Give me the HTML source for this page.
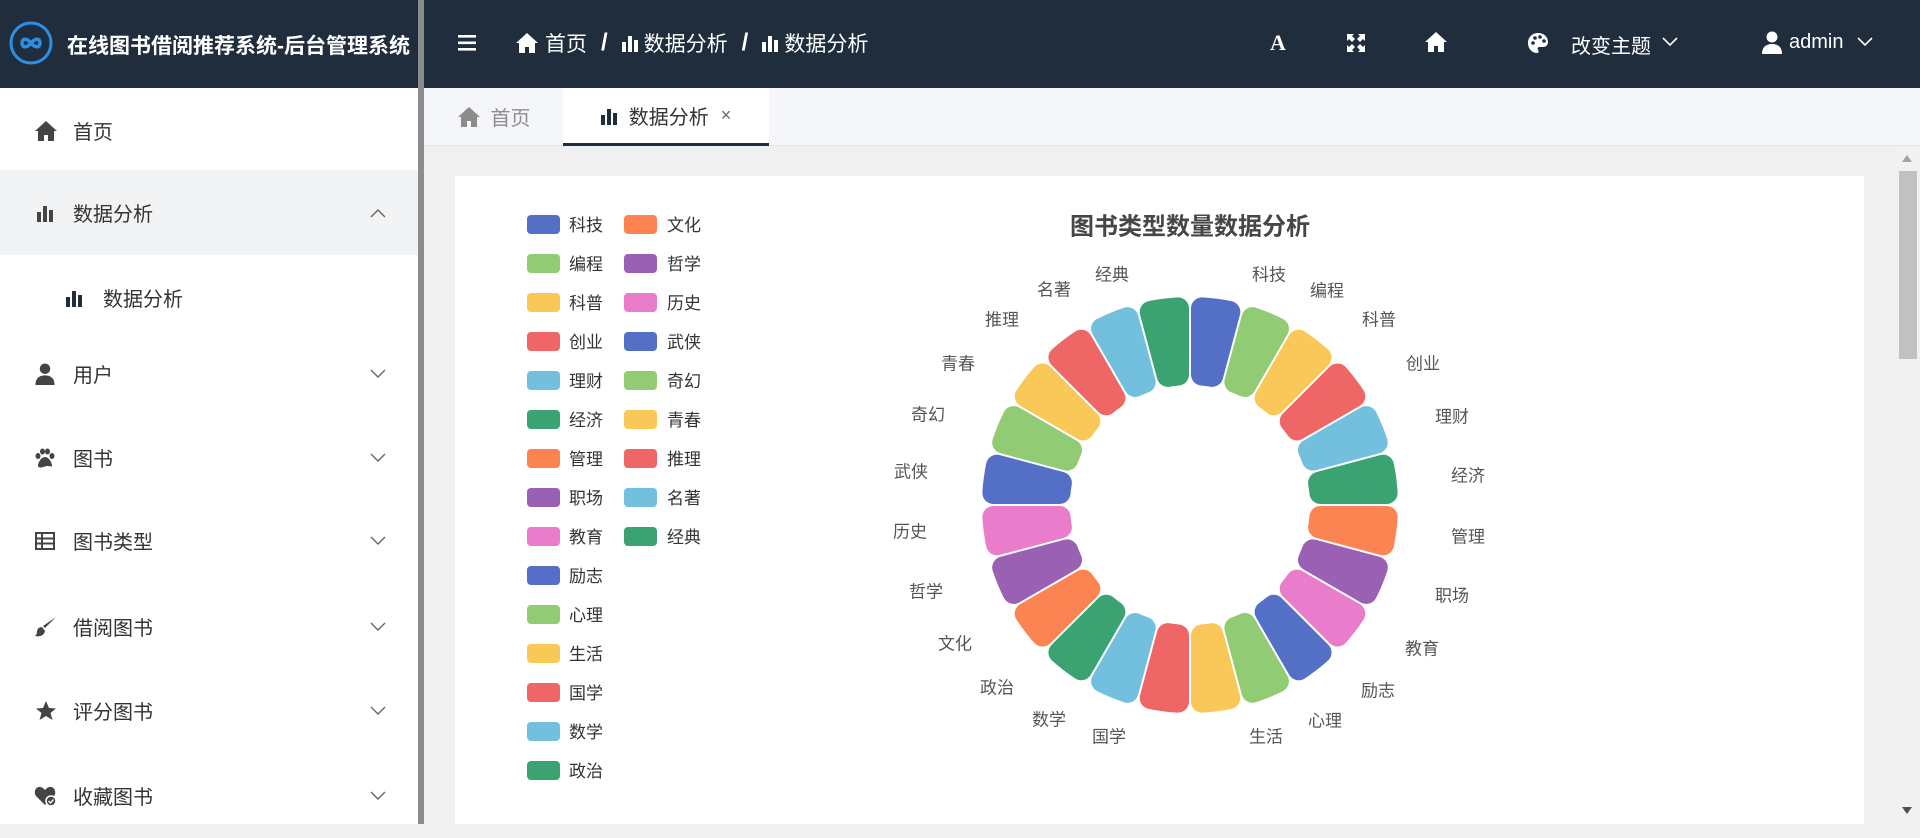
<!DOCTYPE html>
<html><head><meta charset="utf-8"><style>
*{margin:0;padding:0;box-sizing:border-box}
body{width:1920px;height:824px;overflow:hidden;font-family:"Liberation Sans","Noto Sans CJK SC",sans-serif;background:#f0f0f0;position:relative}
.hdr{position:absolute;left:0;top:0;width:1920px;height:88px;background:#1f2d3d;color:#fff}
.abs{position:absolute}
.side{position:absolute;left:0;top:88px;width:418px;height:736px;background:#fff}
.divider{position:absolute;left:418px;top:0;width:6px;height:824px;background:#8c8c8c}
.mi{position:absolute;left:0;width:418px;height:85px;display:flex;align-items:center;font-size:20px;color:#333}
.mi svg.ic{position:absolute;left:34px}
.mi span{position:absolute;left:73px}
.mi .chev{position:absolute;left:370px}
.tabs{position:absolute;left:424px;top:88px;width:1496px;height:58px;background:#f4f6fa;border-bottom:1px solid #e4e6ea}
.card{position:absolute;left:455px;top:176px;width:1409px;height:648px;background:#fff}
.lg{position:absolute;font-size:17px;color:#333}
.sw{position:absolute;width:33px;height:19px;border-radius:4px}
.lab{position:absolute;font-size:17px;color:#555;transform:translate(-50%,-50%);white-space:nowrap}
</style></head><body>
<div class="hdr">
  <svg class="abs" style="left:8px;top:20px" width="46" height="46" viewBox="0 0 46 46"><circle cx="23" cy="23" r="20" fill="none" stroke="#2a8fe6" stroke-width="3"/><path d="M23 23c-4-5-9-5-9 0s5 5 9 0 9-5 9 0-5 5-9 0" fill="none" stroke="#2a8fe6" stroke-width="3.5"/></svg>
  <div class="abs" style="left:67px;top:30px;font-size:21px;font-weight:bold;white-space:nowrap">在线图书借阅推荐系统-后台管理系统</div>
  <svg class="abs" style="left:458px;top:35px" width="18" height="16"><rect y="0" width="18" height="2.6" fill="#fff"/><rect y="6.5" width="18" height="2.6" fill="#fff"/><rect y="13" width="18" height="2.6" fill="#fff"/></svg>
  <div class="abs" style="left:515px;top:28px;font-size:21px;display:flex;align-items:center;gap:6px;white-space:nowrap">
    <svg width="24" height="22" viewBox="0 0 24 22"><path d="M12 1 1 11h3v10h6v-6h4v6h6V11h3z" fill="#fff"/></svg><span>首页</span><b style="margin:0 8px;font-size:24px">/</b>
    <svg width="16" height="18"><rect x="0" y="8" width="4" height="10" fill="#fff"/><rect x="6" y="2" width="4" height="16" fill="#fff"/><rect x="12" y="6" width="4" height="12" fill="#fff"/></svg><span>数据分析</span><b style="margin:0 8px;font-size:24px">/</b>
    <svg width="16" height="18"><rect x="0" y="8" width="4" height="10" fill="#fff"/><rect x="6" y="2" width="4" height="16" fill="#fff"/><rect x="12" y="6" width="4" height="12" fill="#fff"/></svg><span>数据分析</span>
  </div>
  <div class="abs" style="left:1270px;top:30px;font-size:22px;font-weight:bold;font-family:'Liberation Serif',serif">A</div>
  <svg class="abs" style="left:1347px;top:34px" width="18" height="18" viewBox="0 0 18 18"><path d="M0 0h7L5 2l3 3-3 3-3-3-2 2zM18 0v7l-2-2-3 3-3-3 3-3-2-2zM0 18v-7l2 2 3-3 3 3-3 3 2 2zM18 18h-7l2-2-3-3 3-3 3 3 2-2z" fill="#fff"/></svg>
  <svg class="abs" style="left:1424px;top:31px" width="24" height="22" viewBox="0 0 24 22"><path d="M12 1 1 11h3v10h6v-6h4v6h6V11h3z" fill="#fff"/></svg>
  <svg class="abs" style="left:1527px;top:32px" width="22" height="22" viewBox="0 0 22 22"><path d="M11 1C5 1 1 5.5 1 11s4 10 9 10c2 0 2-2 1-3-1-2 0-3 2-3h3c3 0 5-2 5-5 0-5-4-9-10-9z" fill="#fff"/><circle cx="6" cy="11" r="1.8" fill="#1f2d3d"/><circle cx="8" cy="6" r="1.8" fill="#1f2d3d"/><circle cx="13" cy="5" r="1.8" fill="#1f2d3d"/><circle cx="17" cy="9" r="1.8" fill="#1f2d3d"/></svg>
  <div class="abs" style="left:1571px;top:30px;font-size:20px">改变主题</div>
  <svg class="abs" style="left:1662px;top:37px" width="16" height="10"><path d="M1 1l7 7 7-7" fill="none" stroke="#fff" stroke-width="1.6"/></svg>
  <svg class="abs" style="left:1762px;top:31px" width="20" height="23" viewBox="0 0 20 23"><circle cx="10" cy="6" r="5.5" fill="#fff"/><path d="M0 23c0-7 4-10 10-10s10 3 10 10z" fill="#fff"/></svg>
  <div class="abs" style="left:1789px;top:31px;font-size:20px">admin</div>
  <svg class="abs" style="left:1857px;top:37px" width="16" height="10"><path d="M1 1l7 7 7-7" fill="none" stroke="#fff" stroke-width="1.6"/></svg>
</div>

<div class="side">
  <div class="mi" style="top:0"><svg class="ic" width="24" height="22" viewBox="0 0 24 22"><path d="M12 1 1 11h3v10h6v-6h4v6h6V11h3z" fill="#444"/></svg><span>首页</span></div>
  <div class="mi" style="top:82px;background:#f2f3f5"><svg class="ic" width="18" height="18" style="left:37px"><rect x="0" y="8" width="4" height="10" fill="#444"/><rect x="6" y="2" width="4" height="16" fill="#444"/><rect x="12" y="6" width="4" height="12" fill="#444"/></svg><span>数据分析</span><svg class="chev" width="16" height="10"><path d="M1 9l7-7 7 7" fill="none" stroke="#666" stroke-width="1.4"/></svg></div>
  <div class="mi" style="top:167px"><svg class="ic" width="18" height="18" style="left:66px"><rect x="0" y="8" width="4" height="10" fill="#1f2d3d"/><rect x="6" y="2" width="4" height="16" fill="#1f2d3d"/><rect x="12" y="6" width="4" height="12" fill="#1f2d3d"/></svg><span style="left:103px">数据分析</span></div>
  <div class="mi" style="top:243px"><svg class="ic" width="20" height="22" viewBox="0 0 20 23" style="left:35px"><circle cx="10" cy="6" r="5.5" fill="#444"/><path d="M0 23c0-7 4-10 10-10s10 3 10 10z" fill="#444"/></svg><span>用户</span><svg class="chev" width="16" height="10"><path d="M1 1l7 7 7-7" fill="none" stroke="#666" stroke-width="1.4"/></svg></div>
  <div class="mi" style="top:327px"><svg class="ic" width="22" height="20" viewBox="0 0 22 20" style="left:34px"><ellipse cx="4" cy="8" rx="2.5" ry="3" fill="#444"/><ellipse cx="8.5" cy="3.5" rx="2.5" ry="3" fill="#444"/><ellipse cx="13.5" cy="3.5" rx="2.5" ry="3" fill="#444"/><ellipse cx="18" cy="8" rx="2.5" ry="3" fill="#444"/><path d="M11 9c-4 0-7 6-7 8.5S7 20 11 18.5 18 20 18 17.5 15 9 11 9z" fill="#444"/></svg><span>图书</span><svg class="chev" width="16" height="10"><path d="M1 1l7 7 7-7" fill="none" stroke="#666" stroke-width="1.4"/></svg></div>
  <div class="mi" style="top:410px"><svg class="ic" width="20" height="18" viewBox="0 0 20 18" style="left:35px"><rect x="1" y="1" width="18" height="16" fill="none" stroke="#444" stroke-width="2"/><path d="M1 6.5h18M1 11.5h18M7 1v16" stroke="#444" stroke-width="2"/></svg><span>图书类型</span><svg class="chev" width="16" height="10"><path d="M1 1l7 7 7-7" fill="none" stroke="#666" stroke-width="1.4"/></svg></div>
  <div class="mi" style="top:496px"><svg class="ic" width="22" height="22" viewBox="0 0 22 22" style="left:35px"><path d="M21 1 10 12l-2-2z" fill="#444"/><path d="M7 11c-3 0-5 2-5 5 0 2-1 3-2 4 4 1 9 0 10-5z" fill="#444"/></svg><span>借阅图书</span><svg class="chev" width="16" height="10"><path d="M1 1l7 7 7-7" fill="none" stroke="#666" stroke-width="1.4"/></svg></div>
  <div class="mi" style="top:580px"><svg class="ic" width="22" height="22" viewBox="0 0 22 22" style="left:35px"><path d="M11 1l3 7 7 .5-5.5 4.5 2 7-6.5-4-6.5 4 2-7L1 8.5 8 8z" fill="#444"/></svg><span>评分图书</span><svg class="chev" width="16" height="10"><path d="M1 1l7 7 7-7" fill="none" stroke="#666" stroke-width="1.4"/></svg></div>
  <div class="mi" style="top:665px"><svg class="ic" width="24" height="22" viewBox="0 0 24 22" style="left:34px"><path d="M11 20 2 11C-1 7 2 1 6.5 2 9 2.5 10 4 11 5c1-1 2-2.5 4.5-3C20 1 23 7 20 11z" fill="#444"/><circle cx="17" cy="16" r="5" fill="#444" stroke="#fff" stroke-width="1.5"/><path d="M14.5 16l2 2 3-3.5" fill="none" stroke="#fff" stroke-width="1.4"/></svg><span>收藏图书</span><svg class="chev" width="16" height="10"><path d="M1 1l7 7 7-7" fill="none" stroke="#666" stroke-width="1.4"/></svg></div>
</div>
<div class="divider"></div>

<div class="tabs">
  <div class="abs" style="left:0;top:0;width:139px;height:57px;display:flex;align-items:center;justify-content:center;gap:10px;font-size:20px;color:#8c8c8c"><svg width="24" height="22" viewBox="0 0 24 22"><path d="M12 1 1 11h3v10h6v-6h4v6h6V11h3z" fill="#8c8c8c"/></svg>首页</div>
  <div class="abs" style="left:139px;top:0;width:206px;height:58px;background:#fff;border-bottom:3px solid #1f2d3d;display:flex;align-items:center;justify-content:center;gap:10px;font-size:20px;color:#333"><svg width="18" height="18"><rect x="0" y="8" width="4" height="10" fill="#1f2d3d"/><rect x="6" y="2" width="4" height="16" fill="#1f2d3d"/><rect x="12" y="6" width="4" height="12" fill="#1f2d3d"/></svg>数据分析<span style="font-size:18px;color:#666;margin-left:2px">×</span></div>
</div>

<div class="card"></div>
<div class="abs" style="left:1896px;top:146px;width:24px;height:678px;background:#f1f1f1"></div>
<div class="abs" style="left:1899px;top:171px;width:18px;height:188px;background:#c1c1c1"></div>
<div class="abs" style="left:1902px;top:155px;width:0;height:0;border-left:5px solid transparent;border-right:5px solid transparent;border-bottom:7px solid #a3a3a3"></div>
<div class="abs" style="left:1902px;top:807px;width:0;height:0;border-left:5px solid transparent;border-right:5px solid transparent;border-top:7px solid #505050"></div>

<div class="abs" style="left:1190px;top:224px;transform:translate(-50%,-50%);font-size:24px;font-weight:bold;color:#464646;white-space:nowrap">图书类型数量数据分析</div>

<svg id="pie" class="abs" style="left:0;top:0" width="1920" height="824"></svg>

<div class="lab" style="left:1269px;top:273px">科技</div>
<div class="lab" style="left:1327px;top:289px">编程</div>
<div class="lab" style="left:1379px;top:318px">科普</div>
<div class="lab" style="left:1423px;top:362px">创业</div>
<div class="lab" style="left:1452px;top:415px">理财</div>
<div class="lab" style="left:1468px;top:474px">经济</div>
<div class="lab" style="left:1468px;top:535px">管理</div>
<div class="lab" style="left:1452px;top:594px">职场</div>
<div class="lab" style="left:1422px;top:647px">教育</div>
<div class="lab" style="left:1378px;top:689px">励志</div>
<div class="lab" style="left:1325px;top:719px">心理</div>
<div class="lab" style="left:1266px;top:735px">生活</div>
<div class="lab" style="left:1109px;top:735px">国学</div>
<div class="lab" style="left:1049px;top:718px">数学</div>
<div class="lab" style="left:997px;top:686px">政治</div>
<div class="lab" style="left:955px;top:642px">文化</div>
<div class="lab" style="left:926px;top:590px">哲学</div>
<div class="lab" style="left:910px;top:530px">历史</div>
<div class="lab" style="left:911px;top:470px">武侠</div>
<div class="lab" style="left:928px;top:413px">奇幻</div>
<div class="lab" style="left:958px;top:362px">青春</div>
<div class="lab" style="left:1002px;top:318px">推理</div>
<div class="lab" style="left:1054px;top:288px">名著</div>
<div class="lab" style="left:1112px;top:273px">经典</div>

<div class="sw" style="left:527px;top:215px;background:#5470c6"></div><div class="lg" style="left:569px;top:211px">科技</div>
<div class="sw" style="left:527px;top:254px;background:#91cc75"></div><div class="lg" style="left:569px;top:250px">编程</div>
<div class="sw" style="left:527px;top:293px;background:#fac858"></div><div class="lg" style="left:569px;top:289px">科普</div>
<div class="sw" style="left:527px;top:332px;background:#ee6666"></div><div class="lg" style="left:569px;top:328px">创业</div>
<div class="sw" style="left:527px;top:371px;background:#73c0de"></div><div class="lg" style="left:569px;top:367px">理财</div>
<div class="sw" style="left:527px;top:410px;background:#3ba272"></div><div class="lg" style="left:569px;top:406px">经济</div>
<div class="sw" style="left:527px;top:449px;background:#fc8452"></div><div class="lg" style="left:569px;top:445px">管理</div>
<div class="sw" style="left:527px;top:488px;background:#9a60b4"></div><div class="lg" style="left:569px;top:484px">职场</div>
<div class="sw" style="left:527px;top:527px;background:#ea7ccc"></div><div class="lg" style="left:569px;top:523px">教育</div>
<div class="sw" style="left:527px;top:566px;background:#5470c6"></div><div class="lg" style="left:569px;top:562px">励志</div>
<div class="sw" style="left:527px;top:605px;background:#91cc75"></div><div class="lg" style="left:569px;top:601px">心理</div>
<div class="sw" style="left:527px;top:644px;background:#fac858"></div><div class="lg" style="left:569px;top:640px">生活</div>
<div class="sw" style="left:527px;top:683px;background:#ee6666"></div><div class="lg" style="left:569px;top:679px">国学</div>
<div class="sw" style="left:527px;top:722px;background:#73c0de"></div><div class="lg" style="left:569px;top:718px">数学</div>
<div class="sw" style="left:527px;top:761px;background:#3ba272"></div><div class="lg" style="left:569px;top:757px">政治</div>
<div class="sw" style="left:624px;top:215px;background:#fc8452"></div><div class="lg" style="left:667px;top:211px">文化</div>
<div class="sw" style="left:624px;top:254px;background:#9a60b4"></div><div class="lg" style="left:667px;top:250px">哲学</div>
<div class="sw" style="left:624px;top:293px;background:#ea7ccc"></div><div class="lg" style="left:667px;top:289px">历史</div>
<div class="sw" style="left:624px;top:332px;background:#5470c6"></div><div class="lg" style="left:667px;top:328px">武侠</div>
<div class="sw" style="left:624px;top:371px;background:#91cc75"></div><div class="lg" style="left:667px;top:367px">奇幻</div>
<div class="sw" style="left:624px;top:410px;background:#fac858"></div><div class="lg" style="left:667px;top:406px">青春</div>
<div class="sw" style="left:624px;top:449px;background:#ee6666"></div><div class="lg" style="left:667px;top:445px">推理</div>
<div class="sw" style="left:624px;top:488px;background:#73c0de"></div><div class="lg" style="left:667px;top:484px">名著</div>
<div class="sw" style="left:624px;top:527px;background:#3ba272"></div><div class="lg" style="left:667px;top:523px">经典</div>

<script>
(function(){
var cols=["#5470c6","#91cc75","#fac858","#ee6666","#73c0de","#3ba272","#fc8452","#9a60b4","#ea7ccc"];
var cx=1190,cy=505,Ro=208,Ri=120,h=11,g=12;
var ro=Ro-h,ri=Ri+h,svg=document.getElementById('pie'),ns="http://www.w3.org/2000/svg";
function pt(r,a){return (cx+r*Math.sin(a)).toFixed(2)+","+(cy-r*Math.cos(a)).toFixed(2);}
for(var i=0;i<24;i++){
 var a0=i*Math.PI/12,a1=(i+1)*Math.PI/12;
 var dO=g/ro,dI=g/ri;
 var d="M"+pt(ro,a0+dO)+"A"+ro+","+ro+" 0 0 1 "+pt(ro,a1-dO)+"L"+pt(ri,a1-dI)+"A"+ri+","+ri+" 0 0 0 "+pt(ri,a0+dI)+"Z";
 var p=document.createElementNS(ns,"path");
 p.setAttribute("d",d);var c=cols[i%9];
 p.setAttribute("fill",c);p.setAttribute("stroke",c);p.setAttribute("stroke-width",2*h);p.setAttribute("stroke-linejoin","round");
 svg.appendChild(p);
}})();
</script>
</body></html>
